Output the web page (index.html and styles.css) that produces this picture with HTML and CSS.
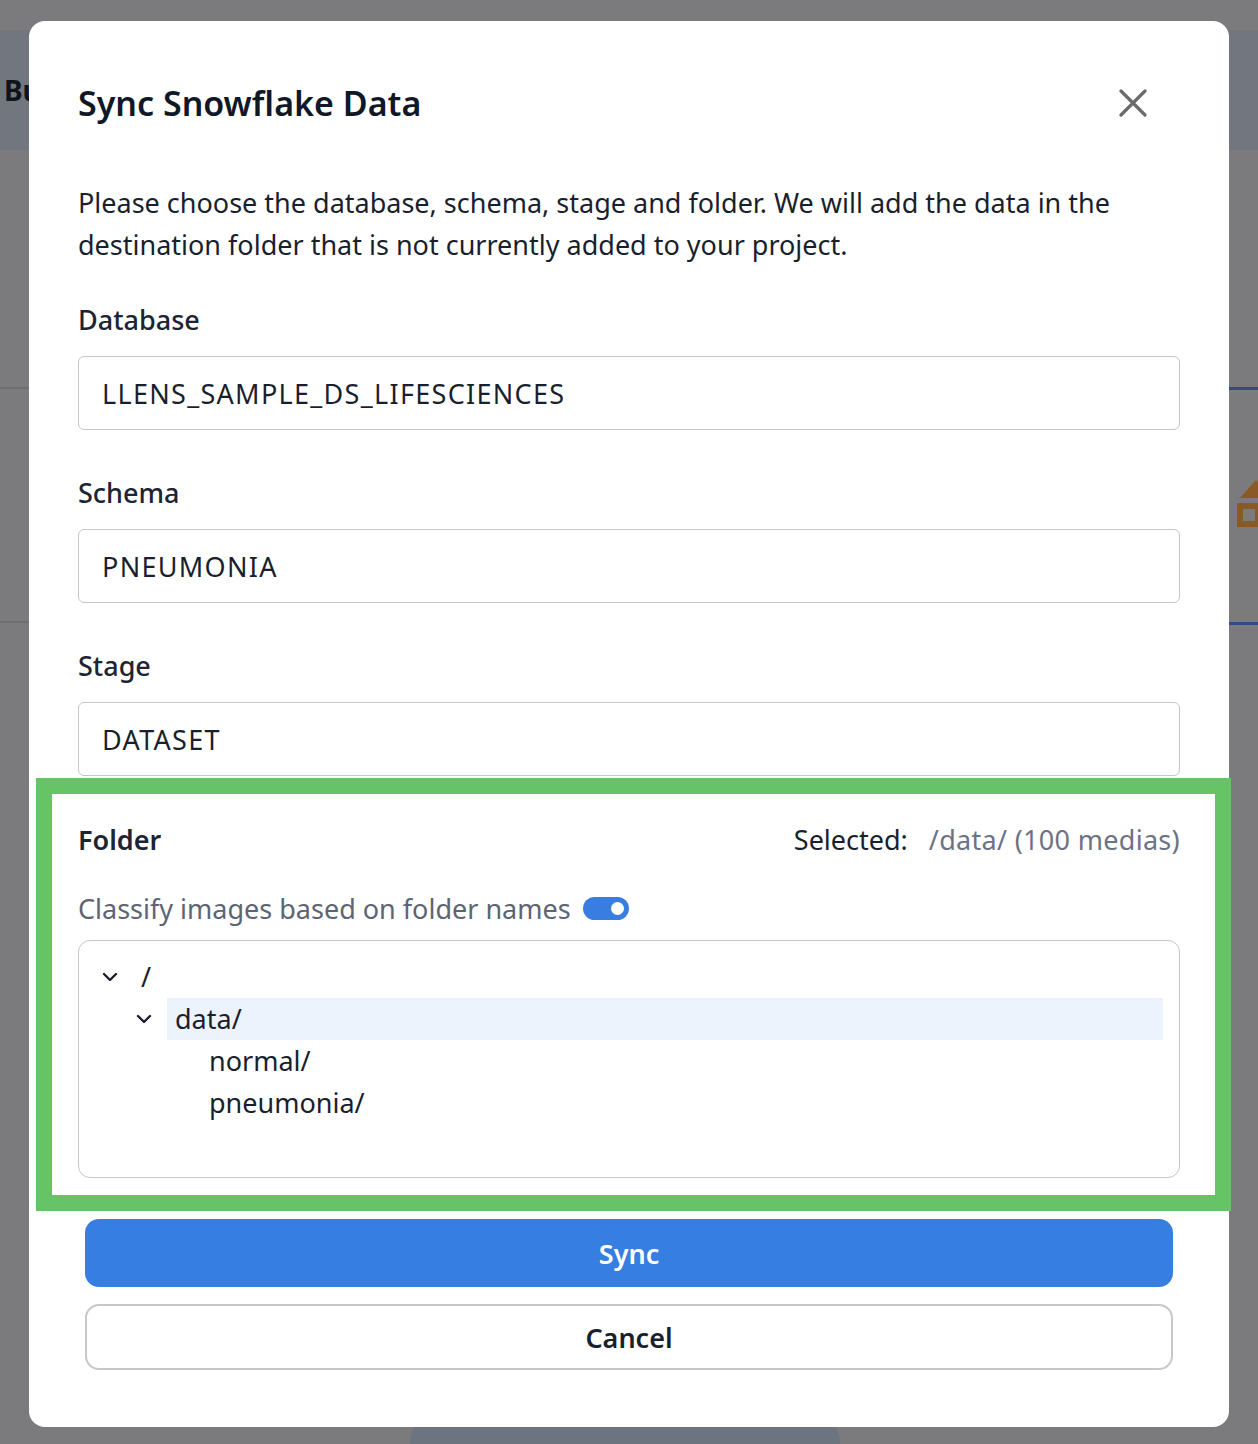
FILE: index.html
```html
<!DOCTYPE html>
<html lang="en">
<head>
    <meta charset="UTF-8">
    <meta name="viewport" content="width=device-width, initial-scale=1.0">
    <title>Sync Snowflake Data</title>
    <link rel="stylesheet" href="styles.css">
</head>
<body>
    <!-- page behind the dialog -->
    <div class="page">
        <div class="page-bar">Build</div>
        <div class="page-cards">
            <div class="page-card">Library of datasets</div>
            <div class="page-card selected">
                <span class="shape-icon">
                    <svg width="40" height="56" viewBox="0 0 40 56"><path d="M20 4 L36 22 L4 22 Z" fill="#8a5a26"/><rect x="4" y="30" width="18" height="18" fill="none" stroke="#8a5a26" stroke-width="6"/></svg>
                </span>
            </div>
        </div>
        <div class="page-footer"><div class="page-footer-btn"></div></div>
    </div>

    <div class="overlay">
        <div class="modal">
            <div class="modal-header">
                <h1>Sync Snowflake Data</h1>
                <button class="close-btn" aria-label="Close">
                    <svg width="28" height="28" viewBox="0 0 28 28"><path d="M2 2 L26 26 M26 2 L2 26" stroke="#6b6b6b" stroke-width="3.2" stroke-linecap="round"/></svg>
                </button>
            </div>

            <p class="intro">Please choose the database, schema, stage and folder. We will add the data in the destination folder that is not currently added to your project.</p>

            <div class="field">
                <label>Database</label>
                <div class="select-box">LLENS_SAMPLE_DS_LIFESCIENCES</div>
            </div>
            <div class="field">
                <label>Schema</label>
                <div class="select-box">PNEUMONIA</div>
            </div>
            <div class="field">
                <label>Stage</label>
                <div class="select-box">DATASET</div>
            </div>

            <div class="folder-section">
                <div class="folder-head">
                    <span class="folder-title">Folder</span>
                    <span class="folder-selected">Selected: <span class="muted">/data/ (100 medias)</span></span>
                </div>
                <div class="classify-row">
                    <span>Classify images based on folder names</span>
                    <span class="toggle on"><span class="knob"></span></span>
                </div>
                <div class="tree">
                    <div class="tree-row">
                        <span class="chevron"><svg width="18" height="18" viewBox="0 0 18 18"><path d="M3 6 L9 12 L15 6" fill="none" stroke="#1a1f2e" stroke-width="2.4" stroke-linecap="round" stroke-linejoin="round"/></svg></span>
                        <span class="tree-label">/</span>
                    </div>
                    <div class="tree-row level-1">
                        <span class="chevron"><svg width="18" height="18" viewBox="0 0 18 18"><path d="M3 6 L9 12 L15 6" fill="none" stroke="#1a1f2e" stroke-width="2.4" stroke-linecap="round" stroke-linejoin="round"/></svg></span>
                        <span class="tree-label active">data/</span>
                    </div>
                    <div class="tree-row level-2">
                        <span class="chevron"></span>
                        <span class="tree-label">normal/</span>
                    </div>
                    <div class="tree-row level-2">
                        <span class="chevron"></span>
                        <span class="tree-label">pneumonia/</span>
                    </div>
                </div>
            </div>

            <div class="actions">
                <button class="sync-btn">Sync</button>
                <button class="cancel-btn">Cancel</button>
            </div>
        </div>
        <!-- highlight frame drawn over the folder section -->
        <div class="highlight-frame"></div>
    </div>
</body>
</html>
```

FILE: styles.css
```css
body {
    margin: 0;
    padding: 0;
    font-family: "Noto Sans", "Open Sans", sans-serif;
    background: #7b7b7d;
    color: #1a1f2e;
    width: 1258px;
    height: 1444px;
    overflow: hidden;
}

/* background page */
.page {
    height: 1444px;
    display: flex;
    flex-direction: column;
}

.page-bar {
    margin-top: 30px;
    height: 120px;
    background: #72767e;
    display: flex;
    align-items: center;
    padding-left: 4px;
    font-size: 28px;
    font-weight: 700;
    color: #0f141c;
}

.page-cards {
    margin-top: 237px;
    display: flex;
    gap: 40px;
}

.page-card {
    height: 232px;
    flex: 1;
    border-top: 2px solid #6e6e70;
    border-bottom: 2px solid #6e6e70;
    display: flex;
    align-items: center;
    font-size: 26px;
    color: #1a1f2e;
    margin-left: -250px;
}

.page-card.selected {
    margin-left: 0;
    border-top: 3px solid #2c4f82;
    border-bottom: 3px solid #2c4f82;
    justify-content: flex-end;
}

.shape-icon {
    margin-right: -18px;
    margin-top: 4px;
}

.page-footer {
    margin-top: auto;
    display: flex;
    justify-content: center;
}

.page-footer-btn {
    width: 430px;
    height: 40px;
    margin-left: -8px;
    background: #6c7480;
    border-radius: 40px 40px 0 0;
}

/* dialog */
.overlay {
    position: fixed;
    inset: 0;
    padding: 21px 29px;
}

.modal {
    width: 1200px;
    height: 1406px;
    box-sizing: border-box;
    background: #fff;
    border-radius: 16px;
    padding: 62px 49px 57px;
    display: flex;
    flex-direction: column;
}

.modal-header {
    display: flex;
    align-items: center;
    justify-content: space-between;
    height: 40px;
}

.modal-header h1 {
    margin: 0;
    font-size: 34px;
    font-weight: 600;
    line-height: 40px;
    color: #101828;
}

.close-btn {
    border: none;
    background: none;
    padding: 0;
    margin-right: 33px;
    width: 28px;
    height: 28px;
    cursor: pointer;
}

.intro {
    margin: 59px 0 0;
    font-size: 27px;
    line-height: 42px;
    color: #1a1f2e;
}

.field {
    margin-top: 36px;
    display: flex;
    flex-direction: column;
    gap: 18px;
}

.field + .field {
    margin-top: 45px;
}

.field label {
    font-size: 27px;
    line-height: 36px;
    font-weight: 500;
    color: #1d2433;
}

.select-box {
    height: 74px;
    box-sizing: border-box;
    border: 1.5px solid #c6c6c6;
    border-radius: 6px;
    padding: 0 23px;
    display: flex;
    align-items: center;
    font-size: 27px;
    letter-spacing: 1.3px;
    color: #1a1f2e;
}

.folder-section {
    margin-top: 45px;
}

.folder-head {
    display: flex;
    justify-content: space-between;
    align-items: center;
    height: 36px;
    font-size: 27px;
}

.folder-title {
    font-weight: 600;
    color: #1d2433;
}

.folder-selected {
    color: #1a1f2e;
}

.muted {
    color: #6b7385;
    margin-left: 14px;
    letter-spacing: 0.3px;
}

.classify-row {
    margin-top: 33px;
    height: 36px;
    display: flex;
    align-items: center;
    gap: 12px;
    font-size: 27px;
    color: #5d6474;
}

.toggle {
    width: 46px;
    height: 23px;
    border-radius: 12px;
    background: #c8ccd4;
    display: flex;
    align-items: center;
    box-sizing: border-box;
    padding: 0 5px;
}

.toggle.on {
    background: #3a7de0;
    justify-content: flex-end;
}

.knob {
    width: 13px;
    height: 13px;
    border-radius: 50%;
    background: #fff;
}

.tree {
    margin-top: 14px;
    height: 238px;
    box-sizing: border-box;
    border: 1.5px solid #c6c6c6;
    border-radius: 12px;
    padding: 15px 16px 0 14px;
}

.tree-row {
    display: flex;
    align-items: center;
    height: 42px;
    font-size: 27px;
    color: #1a1f2e;
}

.tree-row.level-1 {
    padding-left: 34px;
}

.tree-row.level-2 {
    padding-left: 68px;
}

.chevron {
    width: 34px;
    height: 42px;
    display: flex;
    align-items: center;
    justify-content: center;
}

.tree-label {
    flex: 1;
    margin-left: 6px;
    padding: 0 8px;
    height: 42px;
    line-height: 42px;
}

.tree-label.active {
    background: #edf3fc;
}

.actions {
    margin-top: 41px;
    padding: 0 7px;
    display: flex;
    flex-direction: column;
    gap: 17px;
}

button.sync-btn,
button.cancel-btn {
    width: 100%;
    font-family: "Noto Sans", "Open Sans", sans-serif;
    font-size: 27px;
    font-weight: 600;
    border-radius: 14px;
    cursor: pointer;
}

.sync-btn {
    height: 68px;
    border: none;
    background: #377ee2;
    color: #fff;
}

.cancel-btn {
    height: 66px;
    border: 2px solid #c8c8c8;
    background: #fff;
    color: #1a1f2e;
}

.highlight-frame {
    position: absolute;
    left: 36px;
    top: 778px;
    width: 1195px;
    height: 433px;
    box-sizing: border-box;
    border: 16px solid #66c466;
    pointer-events: none;
}
```
